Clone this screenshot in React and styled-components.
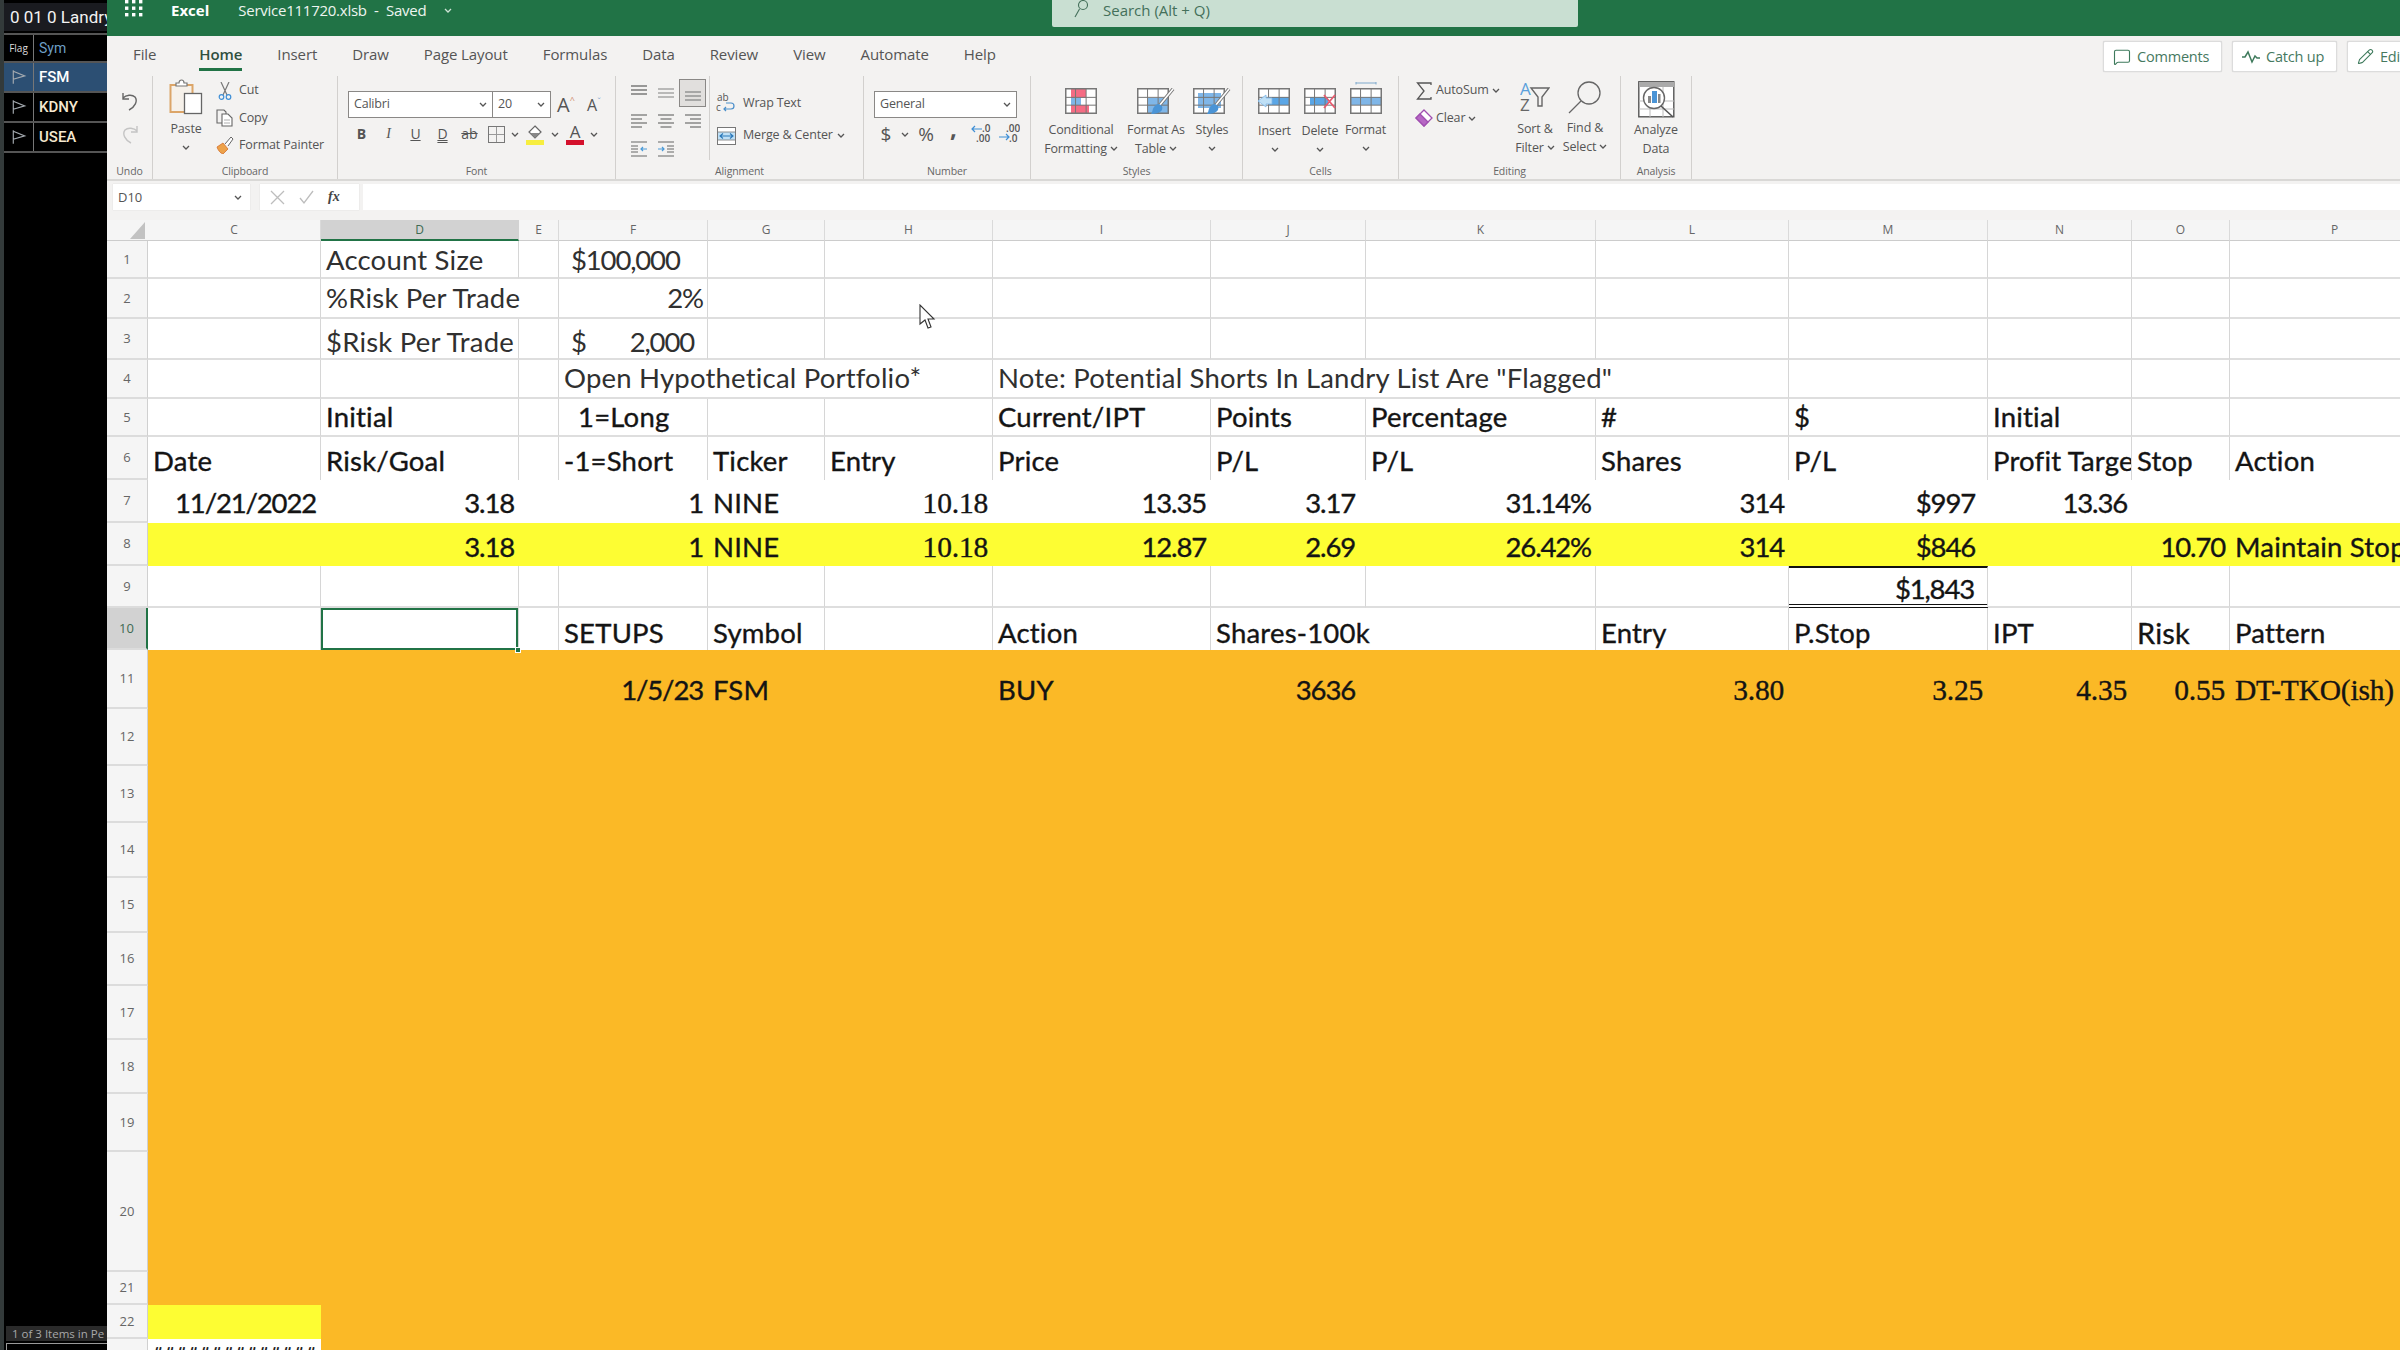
import React from 'react';
import styled, { createGlobalStyle } from 'styled-components';
import { MessageSquare, Pencil } from 'lucide-react';

const Global = createGlobalStyle`
  html, body { margin: 0; padding: 0; background: #000; }
  * { box-sizing: border-box; }
`;

const UI = '"Open Sans", "Noto Sans", sans-serif';
const GREEN = '#217346';
const ORANGE = '#fbb926';
const YELLOW = '#fdfd33';

const Root = styled.div`
  position: relative;
  width: 2400px;
  height: 1350px;
  overflow: hidden;
  display: flex;
  font-family: ${UI};
`;

/* ---------- left watch list ---------- */
const Sidebar = styled.aside`
  width: 107px;
  flex: none;
  height: 100%;
  background: #000;
  border-left: 4px solid #333a3a;
  display: flex;
  flex-direction: column;
  padding-top: 3px;
  overflow: hidden;
`;
const ListTitle = styled.div`
  height: 28px;
  background: #1a1b20;
  color: #f2f2f2;
  font: 17px/28px Roboto, sans-serif;
  padding-left: 6px;
  white-space: nowrap;
  overflow: hidden;
  margin-bottom: 2px;
`;
const ListRow = styled.div`
  height: ${p => p.$h || 30}px;
  display: flex;
  background: ${p => p.$active ? '#2c4f73' : 'transparent'};
  border-top: 2px solid #555;
  align-items: stretch;
`;
const FlagCell = styled.div`
  width: 30px;
  border-right: 1px solid #777;
  display: flex;
  align-items: center;
  justify-content: center;
  color: #ddd;
  font-size: 10px;
`;
const SymCell = styled.div`
  flex: 1;
  padding-left: 5px;
  display: flex;
  align-items: center;
  color: ${p => p.$head ? '#6d9fc6' : p.$active ? '#fff' : '#f5e8cf'};
  font: ${p => p.$head ? 400 : 500} ${p => p.$head ? 14 : 15}px Roboto, sans-serif;
`;
const ListEnd = styled.div`
  border-top: 2px solid #555;
  flex: 1;
`;
const ListFooter = styled.div`
  height: 15px;
  margin-left: 2px;
  background: #2a2a2a;
  color: #a8a8a8;
  font: 11.5px/15px "Open Sans", sans-serif;
  padding-left: 6px;
  white-space: nowrap;
  overflow: hidden;
`;
const ListScroll = styled.div`
  height: 7px;
  margin: 2px 0 0 2px;
  border-top: 1px solid #999;
  border-left: 1px solid #999;
`;

/* ---------- excel frame ---------- */
const Main = styled.main`
  flex: 1;
  min-width: 0;
  height: 100%;
  display: flex;
  flex-direction: column;
  background: #f3f2f1;
  overflow: hidden;
`;
const TitleBar = styled.header`
  height: 36px;
  flex: none;
  background: ${GREEN};
  display: flex;
  align-items: flex-start;
  padding-left: 18px;
  color: #fff;
`;
const TitleExcel = styled.span`
  font: 700 15px/20px ${UI};
  margin-left: 28px;
`;
const TitleFile = styled.span`
  font: 400 15px/20px ${UI};
  margin-left: 29px;
  letter-spacing: -0.25px;
  color: #eef5f0;
`;
const TitleChevron = styled.span`
  margin: 3px 0 0 18px;
  display: flex;
  height: 14px;
  align-items: center;
`;
const SearchBox = styled.div`
  width: 526px;
  height: 27px;
  background: #c9dfd2;
  border-radius: 0 0 2px 2px;
  margin-left: auto;
  margin-right: 822px;
  display: flex;
  align-items: flex-start;
  padding: 0 0 0 22px;
  color: #44705a;
  font: 15px/20px ${UI};
  gap: 15px;
`;

/* ---------- ribbon ---------- */
const TabRow = styled.nav`
  height: 40px;
  flex: none;
  display: flex;
  align-items: flex-start;
  padding-left: 26px;
`;
const Tab = styled.div`
  margin-right: ${p => p.$gap ?? 35}px;
  height: 35px;
  padding-top: 8px;
  font: ${p => p.$active ? 600 : 400} 15px/20px ${UI};
  letter-spacing: -0.1px;
  color: ${p => p.$active ? '#2f4f3f' : '#555'};
  border-bottom: 3px solid ${p => p.$active ? GREEN : 'transparent'};
`;
const TabEnd = styled.div`
  margin-left: auto;
  margin-right: -60px;
  margin-top: 5px;
  display: flex;
  gap: 10px;
`;
const CommandButton = styled.div`
  width: ${p => p.$w}px;
  height: 31px;
  flex: none;
  background: #fff;
  border: 1px solid #dcdcdc;
  border-radius: 2px;
  box-shadow: 0 0 1px #bbb;
  color: #46795f;
  font: 500 14.5px/29px ${UI};
  letter-spacing: -0.2px;
  display: flex;
  align-items: center;
  justify-content: flex-start;
  gap: 6px;
  padding-left: 9px;
`;
const GroupRow = styled.div`
  height: 105px;
  flex: none;
  display: flex;
  border-bottom: 2px solid #d9d8d6;
`;
const Group = styled.section`
  width: ${p => p.$w}px;
  flex: none;
  height: 103px;
  border-right: 1px solid #d2d0ce;
  display: flex;
  flex-direction: column;
`;
const GroupBody = styled.div`
  height: 88px;
  display: flex;
  flex-direction: ${p => p.$col ? 'column' : 'row'};
  align-items: ${p => p.$col ? 'flex-start' : 'stretch'};
  padding-left: ${p => p.$pl || 0}px;
`;
const GroupLabel = styled.div`
  height: 15px;
  font: 400 10.5px/15px ${UI};
  text-align: center;
  color: #666;
  letter-spacing: -0.1px;
`;
const UndoStack = styled.div`
  display: flex;
  flex-direction: column;
  align-items: center;
  gap: 11px;
  padding-top: 14px;
  width: 100%;
`;
const BigButton = styled.div`
  width: ${p => p.$w}px;
  flex: none;
  display: flex;
  flex-direction: column;
  align-items: center;
  padding-top: ${p => p.$top ?? 10}px;
  font: 400 12.5px/19px ${UI};
  letter-spacing: -0.15px;
  color: #555;
  white-space: nowrap;
`;
const BigIcon = styled.div`
  height: ${p => p.$h || 30}px;
  display: flex;
  align-items: flex-end;
  margin-bottom: ${p => p.$mb ?? 4}px;
`;
const BigLine = styled.div`
  height: 19px;
  display: flex;
  align-items: center;
  gap: 3px;
`;
const SmallStack = styled.div`
  display: flex;
  flex-direction: column;
  padding-top: ${p => p.$top ?? 3}px;
  padding-left: ${p => p.$pl ?? 0}px;
  width: ${p => p.$w ? p.$w + 'px' : 'auto'};
`;
const SmallButton = styled.div`
  height: ${p => p.$h || 27}px;
  display: flex;
  align-items: center;
  gap: ${p => p.$gap ?? 5}px;
  font: 400 12.5px/1 ${UI};
  letter-spacing: -0.15px;
  color: #555;
  white-space: nowrap;
`;
const IconSlot = styled.span`
  width: ${p => p.$w || 18}px;
  height: 20px;
  flex: none;
  display: flex;
  align-items: center;
  justify-content: center;
`;
const ComboRow = styled.div`
  display: flex;
  align-items: center;
  height: 27px;
  margin-top: 15px;
`;
const Combo = styled.div`
  display: flex;
  height: 27px;
  width: ${p => p.$w}px;
  background: #fff;
  border: 1px solid #8a8886;
`;
const ComboField = styled.div`
  flex: ${p => p.$w ? 'none' : 1};
  width: ${p => p.$w ? p.$w + 'px' : 'auto'};
  border-right: ${p => p.$sep ? '1px solid #8a8886' : 'none'};
  display: flex;
  align-items: center;
  justify-content: space-between;
  padding: 0 5px;
  font: 400 12.5px/1 ${UI};
  letter-spacing: -0.2px;
  color: #555;
`;
const GrowGlyph = styled.span`
  width: ${p => p.$w}px;
  font: 400 ${p => p.$size}px/1 ${UI};
  color: #555;
  text-align: center;
  flex: none;
  display: flex;
  justify-content: center;
  align-items: flex-start;
`;
const GrowMark = styled.span`
  font-size: 9px;
  color: ${p => p.$blue ? '#7aa7d0' : '#d08a6a'};
`;
const ToolRow = styled.div`
  display: flex;
  align-items: center;
  height: 24px;
  margin-top: 4px;
`;
const ToolCell = styled.div`
  width: ${p => p.$w || 27}px;
  height: 24px;
  flex: none;
  display: flex;
  align-items: center;
  justify-content: center;
  padding-bottom: ${p => p.$up || 0}px;
  color: #555;
  font: ${p => p.$bold ? 700 : 400} ${p => p.$size || 14}px/1 ${p => p.$serif ? '"Liberation Serif", serif' : UI};
  font-style: ${p => p.$italic ? 'italic' : 'normal'};
  text-decoration: ${p => p.$under ? 'underline' : p.$strike ? 'line-through' : 'none'};
  text-decoration-style: ${p => p.$double ? 'double' : 'solid'};
`;
const AlignGrid = styled.div`
  display: grid;
  grid-template-columns: repeat(3, 27px);
  grid-auto-rows: 28px;
  padding: 3px 0 0 9px;
  width: 94px;
  border-right: 1px solid #d2d0ce;
  height: 84px;
`;
const AlignCell = styled.div`
  display: flex;
  align-items: center;
  justify-content: center;
  background: ${p => p.$on ? '#e1dfdd' : 'transparent'};
  border: 1px solid ${p => p.$on ? '#8a8886' : 'transparent'};
`;
const FormulaBar = styled.div`
  height: 29px;
  flex: none;
  padding: 3px 0 0 6px;
  display: flex;
  margin-bottom: 10px;
`;
const NameBox = styled.div`
  width: 137px;
  height: 26px;
  background: #fff;
  box-shadow: 0 0 1px #ccc;
  display: flex;
  align-items: center;
  justify-content: space-between;
  padding: 0 8px 0 5px;
  font: 400 13px/1 ${UI};
  color: #555;
`;
const FxBox = styled.div`
  width: 99px;
  height: 26px;
  margin-left: 10px;
  background: #fff;
  box-shadow: 0 0 1px #ccc;
  display: flex;
  align-items: center;
  gap: 14px;
  padding-left: 10px;
`;
const FxMark = styled.span`
  font: italic 700 14px/1 "Liberation Serif", serif;
  color: #444;
`;
const FormulaInput = styled.div`
  flex: 1;
  height: 26px;
  margin-left: 4px;
  background: #fff;
`;

/* ---------- sheet ---------- */
const COLS = [['C', 173], ['D', 198], ['E', 40], ['F', 149], ['G', 117], ['H', 168], ['I', 218], ['J', 155], ['K', 230], ['L', 193], ['M', 199], ['N', 144], ['O', 98], ['P', 210]];

const y = s => ({ t: s });
const ROWS = [
  { n: 1, h: 38, kind: 'grid', pb: 2, cells: { D: { t: 'Account Size' }, F: { t: '$100,000', pl: 12 } } },
  { n: 2, h: 40, kind: 'grid', pb: 4, cells: { D: { t: '%Risk Per Trade', span: 2 }, F: { t: '2%', r: 1, pr: 4 } } },
  { n: 3, h: 41, kind: 'grid', pb: 1, cells: { D: { t: '$Risk Per Trade' }, F: { acct: ['$', '2,000'] } } },
  { n: 4, h: 39, kind: 'grid', pb: 4, cells: { F: { t: 'Open Hypothetical Portfolio*', span: 3 }, I: { t: 'Note: Potential Shorts In Landry List Are "Flagged"', span: 4 } } },
  { n: 5, h: 38, kind: 'grid', heavy: 1, pb: 3, cells: { D: y('Initial'), F: { t: '1=Long', pl: 19 }, I: y('Current/IPT'), J: y('Points'), K: y('Percentage'), L: y('#'), M: y('$'), N: y('Initial') } },
  { n: 6, h: 43, kind: 'grid', heavy: 1, nobottom: 1, pb: 4, cells: { C: y('Date'), D: y('Risk/Goal'), F: y('-1=Short'), G: y('Ticker'), H: y('Entry'), I: y('Price'), J: y('P/L'), K: y('P/L'), L: y('Shares'), M: y('P/L'), N: { t: 'Profit Target', clip: 1 }, O: y('Stop'), P: y('Action') } },
  { n: 7, h: 43, kind: 'bare', heavy: 1, pb: 5, cells: { C: { t: '11/21/2022', r: 1 }, D: { t: '3.18', r: 1 }, F: { t: '1', r: 1 }, G: y('NINE'), H: { t: '10.18', r: 1, serif: 1 }, I: { t: '13.35', r: 1 }, J: { t: '3.17', r: 1, pr: 11 }, K: { t: '31.14%', r: 1 }, L: { t: '314', r: 1 }, M: { t: '$997', r: 1, pr: 13 }, N: { t: '13.36', r: 1 } } },
  { n: 8, h: 43, kind: 'yellow', heavy: 1, pb: 4, cells: { D: { t: '3.18', r: 1 }, F: { t: '1', r: 1 }, G: y('NINE'), H: { t: '10.18', r: 1, serif: 1 }, I: { t: '12.87', r: 1 }, J: { t: '2.69', r: 1, pr: 11 }, K: { t: '26.42%', r: 1 }, L: { t: '314', r: 1 }, M: { t: '$846', r: 1, pr: 13 }, O: { t: '10.70', r: 1 }, P: y('Maintain Stop') } },
  { n: 9, h: 42, kind: 'grid', heavy: 1, pb: 0, cells: { M: { t: '$1,843', r: 1, pr: 13, total: 1 } } },
  { n: 10, h: 42, kind: 'grid', heavy: 1, nobottom: 1, pb: 2, sel: 1, cells: { D: { selected: 1 }, F: y('SETUPS'), G: y('Symbol'), I: y('Action'), J: { t: 'Shares-100k', span: 2 }, L: y('Entry'), M: y('P.Stop'), N: y('IPT'), O: { t: 'Risk', size: 29 }, P: y('Pattern') } },
  { n: 11, h: 59, kind: 'orange', heavy: 1, pb: 4, cells: { F: { t: '1/5/23', r: 1 }, G: y('FSM'), I: y('BUY'), J: { t: '3636', r: 1, pr: 11 }, L: { t: '3.80', r: 1, serif: 1 }, M: { t: '3.25', r: 1, serif: 1 }, N: { t: '4.35', r: 1, serif: 1 }, O: { t: '0.55', r: 1, serif: 1 }, P: { t: 'DT-TKO(ish)', serif: 1 } } },
  { n: 12, h: 57, kind: 'orange' },
  { n: 13, h: 57, kind: 'orange' },
  { n: 14, h: 55, kind: 'orange' },
  { n: 15, h: 55, kind: 'orange' },
  { n: 16, h: 53, kind: 'orange' },
  { n: 17, h: 54, kind: 'orange' },
  { n: 18, h: 54, kind: 'orange' },
  { n: 19, h: 58, kind: 'orange' },
  { n: 20, h: 120, kind: 'orange' },
  { n: 21, h: 33, kind: 'orange' },
  { n: 22, h: 34, kind: 'orange', cells: { C: { fill: YELLOW } } },
  { n: 23, h: 42, kind: 'orange', cells: { C: { fill: '#fff', hashes: 1 } } },
];

const Sheet = styled.div`
  display: grid;
  grid-template-columns: 41px ${COLS.map(c => c[1] + 'px').join(' ')};
  grid-template-rows: 21px ${ROWS.map(r => r.h + 'px').join(' ')};
  background: #fff;
  flex: none;
`;
const Corner = styled.div`
  background: #f5f5f5;
  border-bottom: 1px solid #ccc;
  display: flex;
  align-items: center;
  justify-content: flex-end;
  padding-right: 3px;
`;
const ColHead = styled.div`
  background: ${p => p.$sel ? '#d2d2d2' : '#f5f5f5'};
  border-right: 1px solid ${p => p.$sel ? '#d2d2d2' : '#dadada'};
  border-bottom: ${p => p.$sel ? `2px solid ${GREEN}` : '1px solid #ccc'};
  font: 400 12px/19px ${UI};
  text-align: center;
  color: ${p => p.$sel ? '#3f6a52' : '#666'};
`;
const RowHead = styled.div`
  background: ${p => p.$sel ? '#d2d2d2' : '#f5f5f5'};
  border-bottom: 2px solid #dcdcdc;
  border-right: ${p => p.$sel ? `2px solid ${GREEN}` : '1px solid #d0d0d0'};
  font: 400 13px/1 ${UI};
  color: ${p => p.$sel ? '#3f6a52' : '#666'};
  display: flex;
  align-items: center;
  justify-content: center;
`;
const FILLS = { grid: '#fff', bare: '#fff', yellow: YELLOW, orange: ORANGE };
const Cell = styled.div`
  position: relative;
  min-width: 0;
  grid-column: span ${p => p.$span || 1};
  background: ${p => p.$fill};
  border-right: ${p => p.$vline ? '1px solid #d6d6d6' : 'none'};
  border-bottom: ${p => p.$hline ? '2px solid #dedede' : 'none'};
  display: flex;
  align-items: flex-end;
  justify-content: ${p => p.$right ? 'flex-end' : p.$between ? 'space-between' : 'flex-start'};
  padding: 0 ${p => p.$pr ?? 5}px ${p => p.$pb ?? 3}px ${p => p.$pl ?? 5}px;
  font: ${p => p.$serif ? '400 29.5px/30px "Liberation Serif", serif' : `400 ${p.$size || 27.5}px/30px Lato, Carlito, sans-serif`};
  letter-spacing: ${p => p.$serif ? '-0.2px' : p.$num ? '-1.15px' : '0.2px'};
  color: ${p => p.$heavy ? '#141414' : '#303030'};
  -webkit-text-stroke: ${p => p.$heavy ? '0.35px' : '0'};
  white-space: nowrap;
  overflow: ${p => p.$clip ? 'hidden' : 'visible'};
  ${p => p.$total ? 'border-top: 2px solid #111; border-bottom: 4px double #111;' : ''}
  ${p => p.$selected ? `box-shadow: inset 0 0 0 2px ${GREEN};` : ''}
`;
const FillHandle = styled.span`
  position: absolute;
  right: -3px;
  bottom: -3px;
  width: 6px;
  height: 6px;
  background: ${GREEN};
  border: 1px solid #fff;
  z-index: 2;
`;
const Hashes = styled.span`
  align-self: flex-start;
  margin-top: 4px;
  font: 700 17px/20px Lato, sans-serif;
  letter-spacing: 1.9px;
  color: #222;
  -webkit-text-stroke: 0;
`;
const CursorLayer = styled.svg`
  position: absolute;
  left: 919px;
  top: 304px;
`;

/* ---------- drawings ---------- */
const ChevSvg = styled.svg`
  flex: none;
  fill: none;
  stroke: ${p => p.$c || '#555'};
  stroke-width: 1.3;
`;
const Chev = ({ c }) => <ChevSvg $c={c} width="8" height="5" viewBox="0 0 8 5"><polyline points="1,1 4,4 7,1" /></ChevSvg>;

const Waffle = () => (
  <svg width="18" height="17" viewBox="0 0 18 17">
    {[0, 7, 14].flatMap(px => [1, 7.5, 14].map(py => <rect key={px + '-' + py} x={px} y={py - 1} width="3.4" height="3.4" fill="#fff" />))}
  </svg>
);
const FlagIcon = () => (
  <svg width="16" height="16" viewBox="0 0 14 14" fill="none" stroke="#a4aab0" strokeWidth="1">
    <path d="M2 1v12M2 2l10 4-10 3" />
  </svg>
);
const Undo = ({ c = '#666' }) => (
  <svg width="20" height="22" viewBox="0 0 20 22" fill="none" stroke={c} strokeWidth="1.4">
    <path d="M3 3v6h6M3 8c3-3 9-4 12-1 3 4 0 10-6 13" />
  </svg>
);
const Redo = ({ c = '#c4c4c4' }) => (
  <svg width="20" height="22" viewBox="0 0 20 22" fill="none" stroke={c} strokeWidth="1.4">
    <path d="M17 3v6h-6M17 8c-3-3-9-4-12-1-3 4 0 10 6 13" />
  </svg>
);
const PasteIcon = () => (
  <svg width="34" height="36" viewBox="0 0 34 36" fill="none">
    <rect x="1.5" y="6" width="22" height="27" fill="#f6f1ea" stroke="#dca568" strokeWidth="2" />
    <path d="M7 7V4h3c0-4 5-4 5 0h3v3z" fill="#fff" stroke="#777" strokeWidth="1.2" />
    <rect x="15.5" y="14.5" width="17" height="20" fill="#fff" stroke="#666" strokeWidth="1.3" />
  </svg>
);
const CutIcon = () => (
  <svg width="14" height="18" viewBox="0 0 14 18" fill="none" strokeWidth="1.2">
    <path d="M3 0l6 13M11 0L5 13" stroke="#777" />
    <circle cx="3.5" cy="15" r="2.3" stroke="#3f8fd6" />
    <circle cx="10.5" cy="15" r="2.3" stroke="#3f8fd6" />
  </svg>
);
const CopyIcon = () => (
  <svg width="18" height="18" viewBox="0 0 18 18" fill="#fff" stroke="#666" strokeWidth="1.1">
    <path d="M1 1h7l2 2v11H1z" fill="none" />
    <path d="M6 5h6l4 4v8H6z" />
    <path d="M8 11h6M8 14h6" strokeWidth=".8" stroke="#999" />
  </svg>
);
const PainterIcon = () => (
  <svg width="18" height="18" viewBox="0 0 18 18" fill="none">
    <path d="M1 11l6-4 5 6-5 5c-3-1-5-4-6-7z" fill="#eda24a" stroke="#d4702c" strokeWidth=".8" />
    <path d="M9 8l6-7 2 2-5 7" fill="#fff" stroke="#666" strokeWidth="1" />
  </svg>
);
const BordersIcon = () => (
  <svg width="17" height="17" viewBox="0 0 17 17" fill="none" stroke="#777" strokeWidth="1">
    <rect x=".5" y=".5" width="16" height="16" />
    <path d="M8.5 1v15M1 8.5h15" stroke="#999" />
  </svg>
);
const FillIcon = () => (
  <svg width="20" height="21" viewBox="0 0 20 21" fill="none">
    <path d="M10 2l6 6-6 6-6-6z" stroke="#666" strokeWidth="1.2" fill="#fff" />
    <path d="M5 9h10l-5 5z" fill="#888" />
    <rect x="1" y="16" width="18" height="5" fill="#f7ee3f" />
  </svg>
);
const FontColorIcon = () => (
  <svg width="20" height="21" viewBox="0 0 20 21">
    <text x="10" y="14" textAnchor="middle" fontFamily="Open Sans" fontSize="17" fill="#555">A</text>
    <rect x="1" y="16" width="18" height="5" fill="#d4112c" />
  </svg>
);
const lines = {
  top: [[1, 2, 17], [1, 6, 17], [1, 10, 17]],
  mid: [[1, 5, 17], [1, 9, 17], [1, 13, 17]],
  bot: [[1, 8, 17], [1, 12, 17], [1, 16, 17]],
  left: [[1, 3, 17], [1, 7, 12], [1, 11, 17], [1, 15, 12]],
  center: [[1, 3, 17], [3.5, 7, 14.5], [1, 11, 17], [3.5, 15, 14.5]],
  right: [[1, 3, 17], [6, 7, 17], [1, 11, 17], [6, 15, 17]],
};
const AlignIcon = ({ k, c = '#666' }) => (
  <svg width="18" height="18" viewBox="0 0 18 18" stroke={c} strokeWidth="1.3">
    {lines[k].map((l, i) => <line key={i} x1={l[0]} y1={l[1]} x2={l[2]} y2={l[1]} />)}
  </svg>
);
const IndentIcon = ({ right }) => (
  <svg width="18" height="18" viewBox="0 0 18 18" stroke="#666" strokeWidth="1.2" fill="none">
    <path d="M1 2h16M1 16h16" />
    {right ? <path d="M10 6h7M10 9h7M10 12h7" /> : <path d="M1 6h7M1 9h7M1 12h7" />}
    {right ? <path d="M1 9h6M5 7l2 2-2 2" stroke="#4a9ad8" /> : <path d="M17 9h-6M13 7l-2 2 2 2" stroke="#4a9ad8" />}
  </svg>
);
const WrapIcon = () => (
  <svg width="20" height="20" viewBox="0 0 20 20" fill="none">
    <text x="1" y="8" fontFamily="Open Sans" fontSize="10" fill="#555">ab</text>
    <text x="0" y="18" fontFamily="Open Sans" fontSize="10" fill="#555">c</text>
    <path d="M8 16h7c4 0 4-6 0-6h-5M10 14l-2 2 2 2" stroke="#4a8fcb" strokeWidth="1.2" />
  </svg>
);
const MergeIcon = () => (
  <svg width="19" height="18" viewBox="0 0 19 18" fill="none">
    <rect x=".5" y=".5" width="18" height="17" fill="#fff" stroke="#777" />
    <rect x="1" y="5" width="17" height="8" fill="#bfe0f6" />
    <path d="M3 9h13M6 6.5L3 9l3 2.5M13 6.5L16 9l-3 2.5" stroke="#2b78b8" strokeWidth="1.1" />
    <path d="M1 5h17M1 13h17" stroke="#777" strokeWidth=".8" />
  </svg>
);
const DecimalIcon = ({ dec }) => (
  <svg width="22" height="22" viewBox="0 0 22 22" fontFamily="Open Sans" fontSize="10" fontWeight="600" fill="#555">
    {dec ? <>
      <text x="8" y="9">.00</text><text x="11" y="19">.0</text>
      <path d="M1 14h10M8 11l3 3-3 3" fill="none" stroke="#3f8fd6" strokeWidth="1.2" />
    </> : <>
      <text x="12" y="9">.0</text><text x="6" y="19">.00</text>
      <path d="M12 6H2M5 3L2 6l3 3" fill="none" stroke="#3f8fd6" strokeWidth="1.2" />
    </>}
  </svg>
);
const Table = ({ w = 32, h = 26, children, top = 0, extra = 0, rows = [0.36, 0.66] }) => (
  <svg width={w + extra} height={h + top} viewBox={`0 ${-top} ${w + extra} ${h + top}`} fill="none">
    <rect x=".5" y=".5" width={w - 1} height={h - 1} fill="#fff" />
    {children && children[0]}
    <g stroke="#777" strokeWidth="1">
      <rect x=".75" y=".75" width={w - 1.5} height={h - 1.5} strokeWidth="1.5" />
      <path d={`M${w * 0.33} 1v${h - 2}M${w * 0.66} 1v${h - 2}M1 ${h * rows[0]}h${w - 2}M1 ${h * rows[1]}h${w - 2}`} />
    </g>
    {children && children[1]}
  </svg>
);
const Brush = () => (
  <>
    <path d="M36 1L22 18" stroke="#777" strokeWidth="3.5" />
    <path d="M36 1L22 18" stroke="#fff" strokeWidth="1.6" />
    <path d="M22 16c3 1 4 3 3 6-2 3-7 4-11 4 2-2 1-5 3-7 1-2 3-3 5-3z" fill="#4a94d6" />
  </>
);
const CondIcon = () => (
  <Table>{[
    <g key="a">
      <rect x="6" y="1" width="15" height="9" fill="#f56c84" />
      <rect x="6" y="10" width="10" height="7" fill="#7fb6e8" />
      <rect x="6" y="17" width="18" height="8" fill="#f56c84" />
    </g>, null]}</Table>
);
const FormatTableIcon = () => (
  <Table extra={6}>{[<rect key="a" x="11" y="10" width="20" height="15" fill="#7fb6e8" />, <Brush key="b" />]}</Table>
);
const StylesIcon = () => (
  <Table extra={6}>{[<rect key="a" x="5" y="5" width="23" height="15" fill="#7fb6e8" />, <Brush key="b" />]}</Table>
);
const InsertIcon = () => (
  <Table extra={1}>{[
    <rect key="a" x="11" y="9" width="21" height="8" fill="#5aa6e6" />,
    <path key="b" d="M0 13l8-6v3h6v6H8v3z" fill="#bfe0f6" stroke="#7fb6e8" strokeWidth=".8" />]}</Table>
);
const DeleteIcon = () => (
  <Table extra={1}>{[
    <rect key="a" x="6" y="9" width="18" height="8" fill="#5aa6e6" />,
    <path key="b" d="M20 7l11 13M31 7L20 20" stroke="#e85a6e" strokeWidth="1.8" />]}</Table>
);
const FormatCellsIcon = () => (
  <Table top={6}>{[
    <rect key="a" x="1" y="9" width="30" height="8" fill="#7fb6e8" />,
    <path key="b" d="M6 -5h20M6 -6.5v3M26 -6.5v3" stroke="#7fa9cc" strokeWidth="1" />]}</Table>
);
const SigmaIcon = () => (
  <svg width="16" height="18" viewBox="0 0 16 18" fill="none" stroke="#555" strokeWidth="1.3">
    <path d="M15 3V1H1.5l6.5 8-6.5 8H15v-2" />
  </svg>
);
const EraserIcon = () => (
  <svg width="18" height="18" viewBox="0 0 18 18" stroke="#a04fb0" strokeWidth="1.3" fill="none">
    <path d="M9 1l8 8-8 8-8-8z" fill="#fff" />
    <path d="M5 5l8 8-4 4-8-8z" fill="#b667c4" />
  </svg>
);
const SortIcon = () => (
  <svg width="30" height="32" viewBox="0 0 30 32" fontFamily="Open Sans" fontSize="17">
    <text x="0" y="14" fill="#5aa0dc">A</text>
    <text x="0" y="30" fill="#666">Z</text>
    <path d="M11 7h18l-7 9v9h-4v-9z" fill="none" stroke="#666" strokeWidth="1.4" />
  </svg>
);
const FindIcon = () => (
  <svg width="34" height="34" viewBox="0 0 34 34" fill="none" stroke="#666" strokeWidth="1.3">
    <circle cx="21" cy="13" r="11" />
    <path d="M13 21L1 33" />
  </svg>
);
const AnalyzeIcon = () => (
  <svg width="37" height="37" viewBox="0 0 37 37" fill="none">
    <rect x=".8" y=".8" width="35" height="35" fill="#fff" stroke="#555" strokeWidth="1.4" />
    <rect x="1" y="1" width="35" height="5" fill="#aaa" />
    <path d="M1 20h35M1 28h35M12 6v30M25 6v30" stroke="#bbb" />
    <circle cx="16" cy="17" r="10.5" fill="#fff" stroke="#666" strokeWidth="1.4" />
    <rect x="10" y="15" width="3" height="7" fill="#888" />
    <rect x="14" y="10" width="5" height="12" fill="#4a94d6" />
    <rect x="20" y="13" width="2.5" height="9" fill="#888" />
    <path d="M23 25l12 11" stroke="#555" strokeWidth="1.6" />
  </svg>
);
const Pulse = () => (
  <svg width="18" height="14" viewBox="0 0 18 14" fill="none" stroke="#3e7a5c" strokeWidth="1.5">
    <path d="M0 7h3l3-5 4 10 3-6 2 2h3" />
  </svg>
);
const MiniSearch = () => (
  <svg width="14" height="19" viewBox="0 0 14 19" fill="none" stroke="#44705a" strokeWidth="1.1">
    <circle cx="9" cy="5" r="4.5" />
    <path d="M5.5 9L1 17" />
  </svg>
);
const FormulaGlyph = ({ check }) => (
  <svg width="15" height="15" viewBox="0 0 15 15" fill="none" stroke="#bdbdbd" strokeWidth="1.3">
    <path d={check ? 'M1 8l4 5 9-12' : 'M1 1l13 13M14 1L1 14'} />
  </svg>
);
const TriangleMark = () => (
  <svg width="15" height="17" viewBox="0 0 15 17"><path d="M15 0v17H0z" fill="#c2c2c2" /></svg>
);

const Big = ({ icon, l1, l2, chev, w, top, h, mb }) => (
  <BigButton $w={w} $top={top}>
    <BigIcon $h={h} $mb={mb}>{icon}</BigIcon>
    <BigLine>{l1}</BigLine>
    <BigLine>{l2}{chev && <Chev />}</BigLine>
  </BigButton>
);

const renderRow = row => {
  const out = [<RowHead key={'h' + row.n} $sel={row.sel}>{row.n}</RowHead>];
  let skip = 0;
  COLS.forEach(([c]) => {
    if (skip > 0) { skip--; return; }
    const s = (row.cells && row.cells[c]) || {};
    skip = (s.span || 1) - 1;
    const lined = row.kind === 'grid';
    out.push(
      <Cell
        key={row.n + c}
        $span={s.span}
        $fill={s.fill || FILLS[row.kind]}
        $vline={lined}
        $hline={lined && !row.nobottom}
        $right={s.r}
        $between={!!s.acct}
        $pl={s.acct ? 12 : s.pl}
        $pr={s.acct ? 13 : s.pr}
        $pb={s.hashes ? 0 : row.pb}
        $serif={s.serif}
        $size={s.size}
        $num={!!s.acct || (s.t && !/[A-Za-z]/.test(s.t))}
        $heavy={row.heavy}
        $clip={s.clip}
        $total={s.total}
        $selected={s.selected}
      >
        {s.acct ? <><span>{s.acct[0]}</span><span>{s.acct[1]}</span></> : s.t}
        {s.hashes && <Hashes>##############</Hashes>}
        {s.selected && <FillHandle />}
      </Cell>
    );
  });
  return out;
};

const tabs = [['File', 43], ['Home', 35, 1], ['Insert'], ['Draw'], ['Page Layout'], ['Formulas'], ['Data'], ['Review'], ['View'], ['Automate'], ['Help']];

export default function App() {
  return (
    <Root>
      <Global />
      <Sidebar>
        <ListTitle>0 01 0 Landry</ListTitle>
        <ListRow $h={28}><FlagCell>Flag</FlagCell><SymCell $head>Sym</SymCell></ListRow>
        <ListRow $active><FlagCell><FlagIcon /></FlagCell><SymCell $active>FSM</SymCell></ListRow>
        <ListRow><FlagCell><FlagIcon /></FlagCell><SymCell>KDNY</SymCell></ListRow>
        <ListRow><FlagCell><FlagIcon /></FlagCell><SymCell>USEA</SymCell></ListRow>
        <ListEnd />
        <ListFooter>1 of 3 Items in Pe</ListFooter>
        <ListScroll />
      </Sidebar>
      <Main>
        <TitleBar>
          <Waffle />
          <TitleExcel>Excel</TitleExcel>
          <TitleFile>Service111720.xlsb&nbsp; - &nbsp;Saved</TitleFile>
          <TitleChevron><Chev c="#cfe3d6" /></TitleChevron>
          <SearchBox><MiniSearch />Search (Alt + Q)</SearchBox>
        </TitleBar>

        <TabRow>
          {tabs.map(([t, g, a]) => <Tab key={t} $gap={g} $active={a}>{t}</Tab>)}
          <TabEnd>
            <CommandButton $w={119}><MessageSquare size={18} strokeWidth={1.5} color="#3e7a5c" />Comments</CommandButton>
            <CommandButton $w={105}><Pulse />Catch up</CommandButton>
            <CommandButton $w={113}><Pencil size={17} strokeWidth={1.5} color="#3e7a5c" />Editing</CommandButton>
          </TabEnd>
        </TabRow>

        <GroupRow>
          <Group $w={46}>
            <GroupBody><UndoStack><Undo /><Redo /></UndoStack></GroupBody>
            <GroupLabel>Undo</GroupLabel>
          </Group>
          <Group $w={185}>
            <GroupBody $pl={3}>
              <Big w={60} top={5} h={34} mb={4} icon={<PasteIcon />} l1="Paste" l2="" chev />
              <SmallStack $top={1}>
                <SmallButton $h={27}><IconSlot><CutIcon /></IconSlot>Cut</SmallButton>
                <SmallButton $h={28}><IconSlot><CopyIcon /></IconSlot>Copy</SmallButton>
                <SmallButton $h={26}><IconSlot><PainterIcon /></IconSlot>Format Painter</SmallButton>
              </SmallStack>
            </GroupBody>
            <GroupLabel>Clipboard</GroupLabel>
          </Group>
          <Group $w={278}>
            <GroupBody $col $pl={10}>
              <ComboRow>
                <Combo $w={203}>
                  <ComboField $w={144} $sep>Calibri<Chev /></ComboField>
                  <ComboField>20<Chev /></ComboField>
                </Combo>
                <GrowGlyph $w={30} $size={20}>A<GrowMark>^</GrowMark></GrowGlyph>
                <GrowGlyph $w={26} $size={16}>A<GrowMark $blue>ˇ</GrowMark></GrowGlyph>
              </ComboRow>
              <ToolRow>
                <ToolCell $bold $size={14}>B</ToolCell>
                <ToolCell $italic $size={14} $serif>I</ToolCell>
                <ToolCell $under $size={14}>U</ToolCell>
                <ToolCell $under $double $size={14}>D</ToolCell>
                <ToolCell $strike $size={14}>ab</ToolCell>
                <ToolCell><BordersIcon /></ToolCell>
                <ToolCell $w={10}><Chev /></ToolCell>
                <ToolCell $w={30}><FillIcon /></ToolCell>
                <ToolCell $w={10}><Chev /></ToolCell>
                <ToolCell $w={30}><FontColorIcon /></ToolCell>
                <ToolCell $w={7}><Chev /></ToolCell>
              </ToolRow>
            </GroupBody>
            <GroupLabel>Font</GroupLabel>
          </Group>
          <Group $w={248}>
            <GroupBody>
              <AlignGrid>
                <AlignCell><AlignIcon k="top" /></AlignCell>
                <AlignCell><AlignIcon k="mid" c="#999" /></AlignCell>
                <AlignCell $on><AlignIcon k="bot" c="#888" /></AlignCell>
                <AlignCell><AlignIcon k="left" c="#777" /></AlignCell>
                <AlignCell><AlignIcon k="center" c="#777" /></AlignCell>
                <AlignCell><AlignIcon k="right" c="#777" /></AlignCell>
                <AlignCell><IndentIcon /></AlignCell>
                <AlignCell><IndentIcon right /></AlignCell>
              </AlignGrid>
              <SmallStack $top={11} $pl={3} $w={150}>
                <SmallButton $h={32} $gap={4}><IconSlot $w={26}><WrapIcon /></IconSlot>Wrap Text</SmallButton>
                <SmallButton $h={33} $gap={4}><IconSlot $w={26}><MergeIcon /></IconSlot>Merge &amp; Center<Chev /></SmallButton>
              </SmallStack>
            </GroupBody>
            <GroupLabel>Alignment</GroupLabel>
          </Group>
          <Group $w={167}>
            <GroupBody $col $pl={10}>
              <ComboRow>
                <Combo $w={143}><ComboField>General<Chev /></ComboField></Combo>
              </ComboRow>
              <ToolRow>
                <ToolCell $w={24} $size={19}>$</ToolCell>
                <ToolCell $w={14}><Chev /></ToolCell>
                <ToolCell $w={28} $size={19}>%</ToolCell>
                <ToolCell $w={27} $bold $size={24} $up={12}>,</ToolCell>
                <ToolCell $w={28}><DecimalIcon /></ToolCell>
                <ToolCell $w={28}><DecimalIcon dec /></ToolCell>
              </ToolRow>
            </GroupBody>
            <GroupLabel>Number</GroupLabel>
          </Group>
          <Group $w={212}>
            <GroupBody $pl={11}>
              <Big w={78} h={28} mb={6} icon={<CondIcon />} l1="Conditional" l2="Formatting" chev />
              <Big w={72} h={28} mb={6} icon={<FormatTableIcon />} l1="Format As" l2="Table" chev />
              <Big w={40} h={28} mb={6} icon={<StylesIcon />} l1="Styles" l2="" chev />
            </GroupBody>
            <GroupLabel>Styles</GroupLabel>
          </Group>
          <Group $w={156}>
            <GroupBody $pl={9}>
              <Big w={45} h={28} mb={7} icon={<InsertIcon />} l1="Insert" l2="" chev />
              <Big w={46} h={28} mb={7} icon={<DeleteIcon />} l1="Delete" l2="" chev />
              <Big w={45} h={28} mb={6} icon={<FormatCellsIcon />} l1="Format" l2="" chev />
            </GroupBody>
            <GroupLabel>Cells</GroupLabel>
          </Group>
          <Group $w={222}>
            <GroupBody $pl={16}>
              <SmallStack $top={1} $w={95}>
                <SmallButton $h={27} $gap={3}><IconSlot><SigmaIcon /></IconSlot>AutoSum<Chev /></SmallButton>
                <SmallButton $h={28} $gap={3}><IconSlot><EraserIcon /></IconSlot>Clear<Chev /></SmallButton>
              </SmallStack>
              <Big w={50} top={5} h={32} mb={6} icon={<SortIcon />} l1="Sort &" l2="Filter" chev />
              <Big w={50} top={4} h={34} mb={4} icon={<FindIcon />} l1="Find &" l2="Select" chev />
            </GroupBody>
            <GroupLabel>Editing</GroupLabel>
          </Group>
          <Group $w={71}>
            <GroupBody>
              <Big w={70} top={5} h={37} mb={2} icon={<AnalyzeIcon />} l1="Analyze" l2="Data" />
            </GroupBody>
            <GroupLabel>Analysis</GroupLabel>
          </Group>
        </GroupRow>

        <FormulaBar>
          <NameBox>D10<Chev /></NameBox>
          <FxBox><FormulaGlyph /><FormulaGlyph check /><FxMark>fx</FxMark></FxBox>
          <FormulaInput />
        </FormulaBar>

        <Sheet>
          <Corner><TriangleMark /></Corner>
          {COLS.map(([c]) => <ColHead key={c} $sel={c === 'D'}>{c}</ColHead>)}
          {ROWS.map(renderRow)}
        </Sheet>
      </Main>
      <CursorLayer width="18" height="26" viewBox="0 0 18 26">
        <path d="M1 1v19l5-4 3 8 3-1-3-8h6z" fill="#fff" stroke="#333" strokeWidth="1.1" />
      </CursorLayer>
    </Root>
  );
}
